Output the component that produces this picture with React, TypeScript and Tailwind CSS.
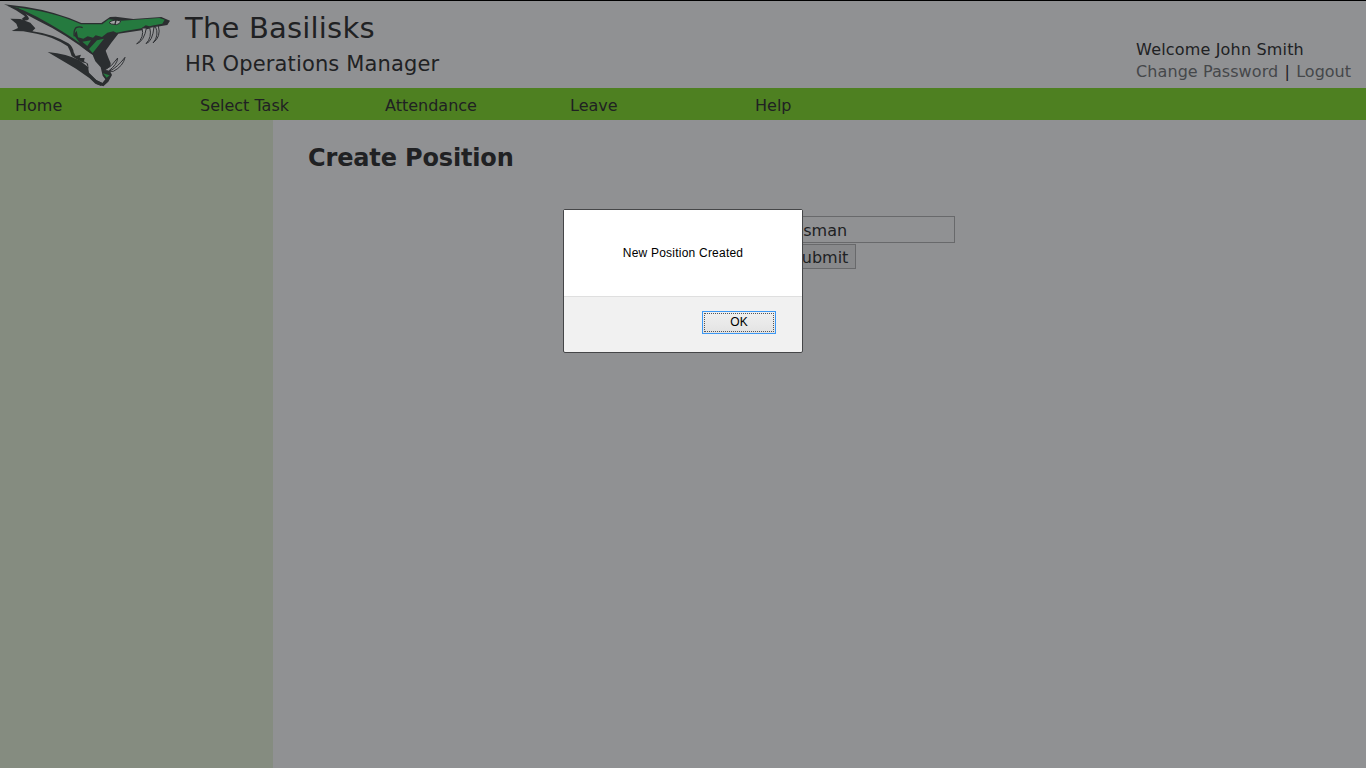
function Logo() {
  return (
    <svg className="block h-[87px] w-[175px]" viewBox="0 3 525 261" fill="none" strokeLinejoin="round">
      {/* head and neck silhouette */}
      <path fill="#2b2e30" d="M12 13L75 20Q170 35 244 69L304 69L330 51L347 50L400 57L484 51L510 62L502 75L480 79L430 90L355 101L334 128L317 152L325 173L332 190L330 213L336 225L325 245L310 259L290 252L266 230L279 167Q200 103 110 60L50 28Z" />
      {/* neck and upper head */}
      <path fill="#257a3f" d="M40 21Q160 34 243 73L307 73L326 58L364 62L386 61L478 54L494 59L487 71L462 76L448 79L437 76L425 85L375 93L350 98L340 94L322 98L306 111L287 106L279 113L263 109L250 116L234 112L230 92Q224 96 224 108L240 130Q196 97 112 51L70 31Z" />
      <path stroke="#2b2e30" strokeWidth="4" d="M248 83Q238 78 228 83Q220 91 223 109" />
      <path fill="#257a3f" d="M247 125L273 121L262 138ZM291 121L312 116L278 159L267 147Z" />
      <path stroke="#2b2e30" strokeWidth="3" fill="#a2a3a5" d="M327 68Q340 56 362 63Q362 71 350 74L334 72Z" />
      <path stroke="#2b2e30" strokeWidth="4" d="M348 60L345 73" />
      {/* pale throat and lower jaw */}
      <path fill="#929396" d="M250 147L278 165L286 184L302 202L308 227L316 238L307 249L289 241L265 218L263 199L242 175L219 151Z" />
      <path fill="#257a3f" d="M309 220L329 226L320 233Z" />
      {/* trailing crest */}
      <path fill="#2b2e30" d="M22 17L55 24Q84 43 87 57Q77 66 65 57L75 49L48 31ZM31 56L61 57L91 68L106 85L97 94Q157 102 205 130Q219 140 221 157L227 168L243 164L239 174L254 174L252 184L264 191L266 208L259 190L247 187L230 178L215 168L210 153L203 139Q162 110 110 101L70 94L35 93L54 84L49 71Z" />
      <path fill="#2b2e30" d="M143 156Q202 162 238 181L264 201L267 218L289 240L309 250L303 258L286 251L269 235L228 206L190 184Z" />
      {/* fangs */}
      <g fill="#98999b" stroke="#303235" strokeWidth="3">
        <path d="M426 84Q434 112 410 132Q433 122 439 84Z" />
        <path d="M449 82Q457 112 438 131Q458 124 462 80Z" />
        <path d="M466 79Q479 106 459 129Q484 110 475 78Z" />
        <path d="M313 211L326 213Q352 193 353 174Q335 201 313 211Z" />
        <path d="M327 214L340 214Q370 198 375 172Q352 203 327 214Z" />
      </g>
    </svg>
  );
}

const menu = ["Home", "Select Task", "Attendance", "Leave", "Help"];

export default function App() {
  return (
    <div className="relative flex h-[768px] w-[1366px] flex-col overflow-hidden border-t border-black bg-[#909193] text-base text-[#202123] [font-family:'DejaVu_Sans',Verdana,sans-serif]">
      <header className="flex h-[87px] shrink-0">
        <Logo />
        <div className="pt-[9px] pl-[10px]">
          <h1 className="text-[29px] leading-[36px] tracking-[0.2px]">The Basilisks</h1>
          <h2 className="text-[21px] leading-[36px] tracking-[0.15px]">HR Operations Manager</h2>
        </div>
        <div className="mt-[38px] mr-[15px] ml-auto leading-[22px]">
          <p className="pl-px tracking-[0.17px]">Welcome John Smith</p>
          <p className="pl-px"><a className="tracking-[0.07px] text-[#45474a]">Change Password</a><span className="px-[6.3px]">|</span><a className="text-[#45474a]">Logout</a></p>
        </div>
      </header>
      <nav className="flex h-8 shrink-0 items-center bg-[#4e8021] pt-[4px] pl-[15px]">
        {menu.map((item) => <a key={item} className="w-[185px]">{item}</a>)}
      </nav>
      <div className="flex grow">
        <aside className="w-[273px] bg-[#858c80]" />
        <main className="grow pt-[22px] pl-[35px]">
          <h2 className="text-2xl leading-8 font-bold tracking-[-0.15px]">Create Position</h2>
          <form className="mt-[42px] ml-[457px] flex flex-col items-start">
            <input className="h-[27px] w-[190px] border border-[#68696b] px-[3px] pt-[2px]" defaultValue="Salesman" />
            <button type="button" className="mt-px ml-[19px] h-[25px] w-[72px] border border-[#68696b] bg-[#88898b] pt-[2px] leading-[21px]">Submit</button>
          </form>
        </main>
      </div>
      <div className="absolute top-[208px] left-[563px] flex h-[144px] w-[240px] flex-col rounded-[2px] border border-[#454648] bg-[#f1f1f1] text-[12px] text-black [font-family:'Liberation_Sans',Arial,sans-serif]">
        <p className="flex h-[87px] items-center justify-center border-b border-[#dfdfdf] bg-white tracking-[0.22px]">New Position Created</p>
        <div className="flex justify-end pt-[14px] pr-[26px]">
          <button className="h-[23px] w-[74px] border border-[#3c98f4] bg-linear-to-b from-[#f0f0f0] to-[#e3e3e3] p-px"><span className="flex h-full items-center justify-center border border-dotted border-[#555] pb-[2px]">OK</span></button>
        </div>
      </div>
    </div>
  );
}
